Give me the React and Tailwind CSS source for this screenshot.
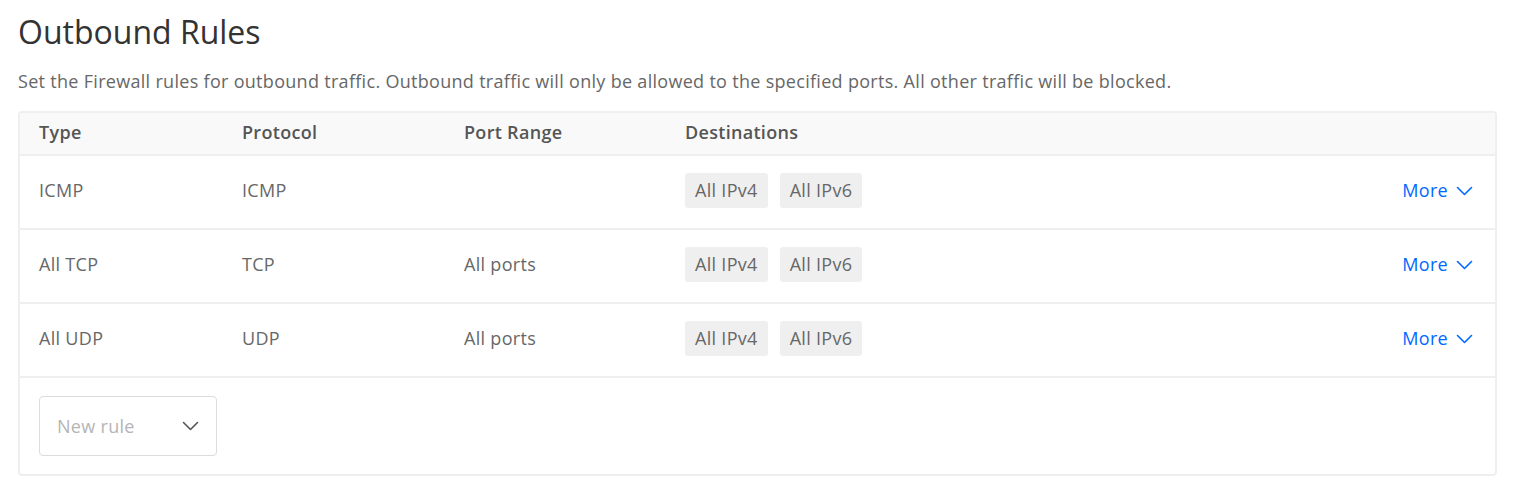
const rules = [
  { type: "ICMP", protocol: "ICMP", ports: "" },
  { type: "All TCP", protocol: "TCP", ports: "All ports" },
  { type: "All UDP", protocol: "UDP", ports: "All ports" },
];

function Chevron({ className }) {
  return (
    <svg width="17" height="10" viewBox="0 0 17 10" fill="none" className={className}>
      <polyline points="1.5,1.5 8.5,8.5 15.5,1.5" stroke="currentColor" strokeWidth="1.6" strokeLinecap="round" strokeLinejoin="round" />
    </svg>
  );
}

function Chip({ children }) {
  return (
    <span className="inline-flex h-[35px] items-center rounded-[3px] bg-[#efefef] px-[10px] text-[18px] text-[#676767]">
      {children}
    </span>
  );
}

export default function App() {
  return (
    <div className="min-h-screen bg-white px-[18px] pt-[12px] font-['Open_Sans',sans-serif] tracking-[0.3px] text-[#676767]">
      <h1 className="text-[32px] font-normal leading-[40px] tracking-normal text-[#333]">Outbound Rules</h1>
      <p className="mt-[17px] text-[18px] leading-[24px]">
        Set the Firewall rules for outbound traffic. Outbound traffic will only be allowed to the specified ports. All other traffic will be blocked.
      </p>

      <div className="mt-[18px] w-[1479px] rounded-[4px] border-2 border-[#efefef]">
        <div className="grid h-[43px] grid-cols-[203px_222px_221px_1fr] items-center border-b-2 border-[#efefef] bg-[#f9f9f9] pb-[2px] pl-[19px] text-[18px] font-semibold text-[#555]">
          <span>Type</span>
          <span>Protocol</span>
          <span>Port Range</span>
          <span>Destinations</span>
        </div>

        {rules.map((r) => (
          <div
            key={r.type}
            className="grid h-[74px] grid-cols-[203px_222px_221px_1fr] items-center border-b-2 border-[#efefef] pb-[3px] pl-[19px] pr-[22px] text-[18px]"
          >
            <span>{r.type}</span>
            <span>{r.protocol}</span>
            <span>{r.ports}</span>
            <div className="flex items-center justify-between">
              <div className="flex gap-[12px]">
                <Chip>All IPv4</Chip>
                <Chip>All IPv6</Chip>
              </div>
              <button type="button" className="flex items-center gap-[8px] text-[18px] text-[#0069ff]">
                More
                <Chevron className="mt-[1px]" />
              </button>
            </div>
          </div>
        ))}

        <div className="h-[96px] pl-[19px] pt-[18px]">
          <div className="flex h-[60px] w-[178px] items-center justify-between rounded-[4px] border border-[#dcdcdc] pl-[17px] pr-[17px] text-[18px] text-[#b5b5b5]">
            <span>New rule</span>
            <Chevron className="text-[#555]" />
          </div>
        </div>
      </div>
    </div>
  );
}
